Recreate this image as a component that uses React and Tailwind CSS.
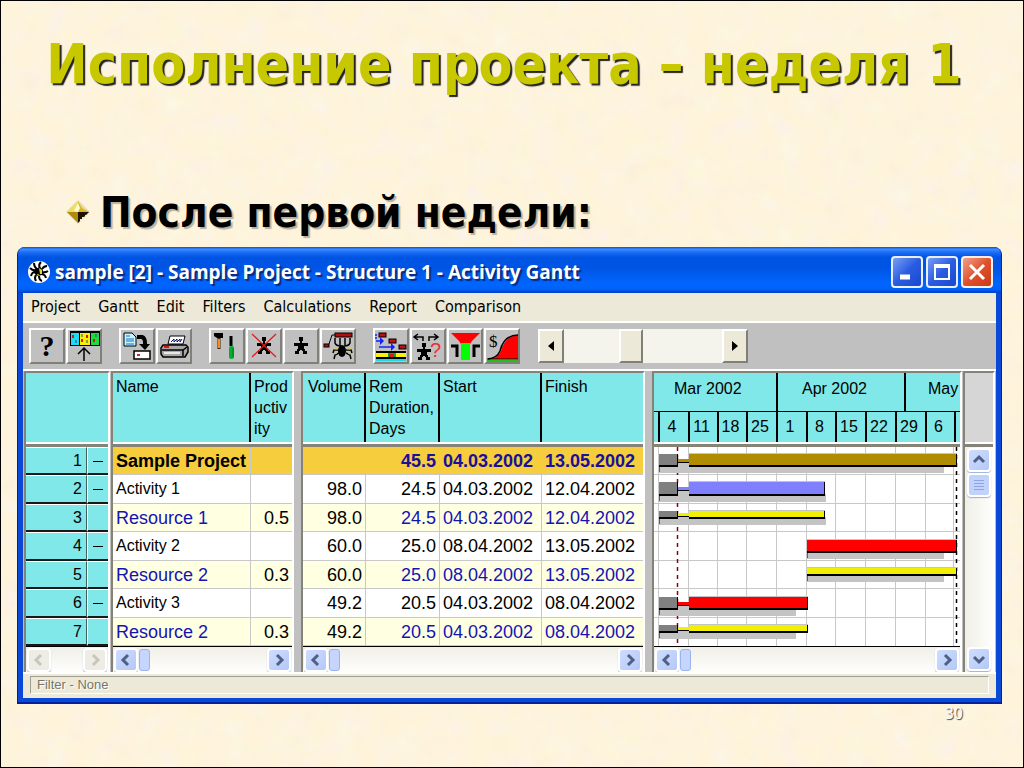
import React from 'react';
import clsx from 'clsx';

const menuItems = ['Project', 'Gantt', 'Edit', 'Filters', 'Calculations', 'Report', 'Comparison'];

const rows = [
  { id: 1, kind: 'project', name: 'Sample Project', prod: '', volume: '', rem: '45.5', start: '04.03.2002', finish: '13.05.2002' },
  { id: 2, kind: 'activity', name: 'Activity 1', prod: '', volume: '98.0', rem: '24.5', start: '04.03.2002', finish: '12.04.2002' },
  { id: 3, kind: 'resource', name: 'Resource 1', prod: '0.5', volume: '98.0', rem: '24.5', start: '04.03.2002', finish: '12.04.2002' },
  { id: 4, kind: 'activity', name: 'Activity 2', prod: '', volume: '60.0', rem: '25.0', start: '08.04.2002', finish: '13.05.2002' },
  { id: 5, kind: 'resource', name: 'Resource 2', prod: '0.3', volume: '60.0', rem: '25.0', start: '08.04.2002', finish: '13.05.2002' },
  { id: 6, kind: 'activity', name: 'Activity 3', prod: '', volume: '49.2', rem: '20.5', start: '04.03.2002', finish: '08.04.2002' },
  { id: 7, kind: 'resource', name: 'Resource 2', prod: '0.3', volume: '49.2', rem: '20.5', start: '04.03.2002', finish: '08.04.2002' },
];

const rowBg = { project: 'bg-[#f5cd3d]', activity: 'bg-white', resource: 'bg-[#ffffe1]' };
const rowText = {
  project: 'text-[#1a0f9c] font-bold',
  activity: 'text-black',
  resource: 'text-[#1414b4]',
};
const nameText = {
  project: 'text-lg/5 font-bold text-black',
  activity: 'text-base/5 text-black',
  resource: 'text-lg/5 text-[#1414b4]',
};

const weeks = ['4', '11', '18', '25', '1', '8', '15', '22', '29', '6'];
const weekLines = [4, 34, 63, 92, 122, 152, 181, 211, 241, 271, 299];
const rowLines = [27, 56, 84, 113, 141, 170];

// y / height of each bar, its colour, and where it runs
const bars = [
  { y: 7, h: 11, color: '#b08c00', done: true, from: 35, to: 303, shadow: 290 },
  { y: 35, h: 12, color: '#8080ff', done: true, from: 35, to: 171, shadow: 172 },
  { y: 64, h: 6, color: '#f0f000', done: true, from: 35, to: 171, shadow: 172 },
  { y: 93, h: 11, color: '#ff0000', done: false, from: 153, to: 303, shadow: 290 },
  { y: 121, h: 6, color: '#f0f000', done: false, from: 153, to: 303, shadow: 290 },
  { y: 150, h: 11, color: '#ff0000', done: true, from: 35, to: 154, shadow: 142 },
  { y: 178, h: 6, color: '#f0f000', done: true, from: 35, to: 154, shadow: 142 },
];

/* ---------- backdrop and small drawings ---------- */

const Parchment = () => (
  <svg className="absolute inset-0 -z-10 h-full w-full" aria-hidden="true">
    <filter id="paper" x="0" y="0" width="100%" height="100%">
      <feTurbulence type="fractalNoise" baseFrequency="0.045" numOctaves="4" seed="8" />
      <feColorMatrix values="0 0 0 0 0.94  0.2 0 0 0 0.79  0 0.5 0 0 0.54  0 0 1.6 0 -0.35" />
    </filter>
    <rect width="100%" height="100%" fill="#fff4da" />
    <rect width="100%" height="100%" filter="url(#paper)" opacity="0.55" />
  </svg>
);

const Bullet = () => (
  <svg width="24" height="24" viewBox="0 0 24 24" aria-hidden="true">
    <path d="M12 0 L24 12 L12 24 L0 12 Z" fill="#e4dab8" />
    <path d="M12 1 L12 12 L1 12 Z" fill="#f0dc60" />
    <path d="M12 1 L16 8 L23 12 L12 12 Z" fill="#dcb820" />
    <path d="M12 3 L14 8 L12 12 L8 11 Z" fill="#fffbd0" />
    <path d="M1 12 L12 12 L12 23 Z" fill="#b08a10" />
    <path d="M12 12 L23 12 L12 23 Z" fill="#1c1400" />
    <path d="M16 17 h3 v-2 h2 L14 22 v-3 h2 Z" fill="#f4ead0" />
  </svg>
);

const AppIcon = () => (
  <svg width="22" height="24" viewBox="0 0 22 24" aria-hidden="true">
    <circle cx="11" cy="12" r="11" fill="#fff" />
    <path
      d="M6 3 Q6 7 9 9 M13 2 Q10 5 12 8 M19 6 Q16 6 14 9 M2 8 Q5 11 8 10 M3 16 Q4 12 7 12 M8 21 Q6 18 8 15 M14 21 Q11 20 11 16 M18 18 Q17 14 13 14 M20 11 Q17 13 14 12"
      stroke="#000"
      strokeWidth="2"
      fill="none"
    />
    <path d="M7 9 L12 7 L15 10 L14 15 L9 16 L6 13 Z" fill="#000" />
    <path d="M11 8 l3 2 l0 4 l-2 0 Z" fill="#e8d820" />
    <path d="M9 14 l2 0 l-1 2 Z" fill="#e8d820" />
  </svg>
);

const Icon = ({ children }) => (
  <svg width="36" height="36" viewBox="0 0 36 36" aria-hidden="true">
    {children}
  </svg>
);

const Figure = ({ x = 18, y = 9 }) => (
  <g transform={`translate(${x} ${y})`}>
    <path d="M-2 0 h4 v4 h-1 v2 h-2 v-2 h-1 Z" />
    <path d="M-7 6 h14 v3 h-4 v3 h1 v2 h2 v3 h-4 v-3 h-1 v-1 h-2 v1 h-1 v3 h-4 v-3 h2 v-2 h1 v-3 h-4 Z" />
  </g>
);

const GanttUp = () => (
  <Icon>
    <rect x="4" y="3" width="30" height="15" />
    <rect x="5" y="5" width="8" height="12" fill="#20d8f8" />
    <rect x="14" y="5" width="10" height="12" fill="#ffee00" />
    <rect x="25" y="5" width="8" height="12" fill="#20d840" />
    <path d="M7 7 v3 M16 11 v3 M21 7 v3 M28 11 v3" stroke="#d02000" strokeWidth="2" />
    <path d="M10 12 v3 M16 6 v3 M21 12 v3 M30 6 v3" stroke="#205080" strokeWidth="1" />
    <path d="M18 33 V20 M12 26 L18 20 L24 26" stroke="#000" strokeWidth="1.5" fill="none" />
  </Icon>
);

const CopyTo = () => (
  <Icon>
    <path d="M5 5 h8 l4 4 v9 h-12 Z" fill="#c8f4ff" stroke="#000" />
    <path d="M7 8 h4 M7 11 h8 M7 13 h8 M7 16 h8" stroke="#1070c0" />
    <path d="M18 9 h5 q3 1 3 6 v2" stroke="#000" strokeWidth="4" fill="none" />
    <path d="M20 16 h11 l-5 6 Z" />
    <rect x="15" y="23" width="16" height="8" fill="#fff" stroke="#000" strokeWidth="1.5" />
    <rect x="18" y="26" width="3" height="2" fill="#e02020" />
  </Icon>
);

const Printer = () => (
  <Icon>
    <path d="M12 16 L14 8 H29 L27 16 Z" fill="#fff" stroke="#000" />
    <path d="M15 14 l3 -3 v3 l3 -3 v3 l3 -3 v3 l2 -3" stroke="#101070" fill="none" />
    <path d="M7 17 h23 l2 2 v5 l-3 5 H7 l-2 -3 v-6 Z" fill="#a8a8a8" stroke="#000" strokeWidth="1.5" />
    <path d="M6 22 h21 l4 -3 M27 22 v6" stroke="#000" strokeWidth="1.5" fill="none" />
    <rect x="8" y="18" width="5" height="2" fill="#e01010" />
    <path d="M8 25 h16" stroke="#e8e8e8" strokeWidth="2" />
  </Icon>
);

const Tools = () => (
  <Icon>
    <path d="M5 5 h9 v5 h-6 l-3 -2 Z" />
    <path d="M10 10 v11" stroke="#402000" strokeWidth="3" />
    <path d="M10 11 v9" stroke="#f09020" strokeWidth="2" />
    <path d="M22 8 v10" stroke="#000" strokeWidth="3" />
    <rect x="20" y="18" width="5" height="13" rx="2" fill="#00b030" />
    <path d="M24 20 v9" stroke="#007020" />
  </Icon>
);

const NoPerson = () => (
  <Icon>
    <Figure />
    <path d="M6 6 L30 29 M30 6 L6 29" stroke="#e01818" strokeWidth="1.2" />
  </Icon>
);

const Person = () => (
  <Icon>
    <Figure />
  </Icon>
);

const Spider = () => (
  <Icon>
    <rect x="15" y="5" width="17" height="4" fill="#b01010" stroke="#000" />
    <rect x="4" y="16" width="5" height="3" fill="#b01010" stroke="#000" />
    <path d="M9 16 L12 7 H15" stroke="#000" fill="none" />
    <path d="M15 10 v5 q1 3 6 3 M20 10 v7 M25 10 v7 M30 10 v5 q-1 3 -6 3" stroke="#000" strokeWidth="1.5" fill="none" />
    <ellipse cx="22" cy="23" rx="4" ry="6" />
    <path d="M19 22 l-5 0 l-1 3 M19 25 l-4 2 l-1 4 M26 22 l5 0 l1 3 M26 25 l4 2 l1 4" stroke="#000" strokeWidth="1.5" fill="none" />
    <path d="M14 21 l4 0 M27 21 l4 0 M15 26 l2 -1 M28 25 l2 1" stroke="#e0d010" />
  </Icon>
);

const Levels = () => (
  <Icon>
    <g fill="#c01010" stroke="#000">
      <rect x="6" y="5" width="7" height="4" />
      <rect x="16" y="11" width="7" height="4" />
      <rect x="26" y="17" width="7" height="4" />
    </g>
    <path d="M3 13 h6 M6 19 h13" stroke="#1020ff" strokeWidth="1.5" />
    <path d="M3 6 v5" stroke="#1020ff" strokeWidth="1.5" strokeDasharray="2 1" />
    <path d="M7 9 l4 4 l-4 4 Z M18 15 l4 4 l-4 4 Z" fill="#1020ff" />
    <rect x="3" y="23" width="30" height="10" />
    <rect x="3" y="25" width="30" height="4" fill="#f8f010" />
    <rect x="3" y="31" width="30" height="2" fill="#20d8e8" />
    <rect x="15" y="25" width="8" height="4" fill="#20a030" />
    <rect x="16" y="26" width="5" height="3" fill="#d02010" />
  </Icon>
);

const PersonQuestion = () => (
  <Icon>
    <path d="M13 13 V9 H4 M8 6 L4 9 L8 12 M19 13 V9 H27 M24 6 L28 9 L24 12" stroke="#000" strokeWidth="1.5" fill="none" />
    <Figure x={14} y={15} />
    <text x="20" y="29" fontSize="20" fill="#e83030" fontFamily="Liberation Sans, sans-serif">?</text>
  </Icon>
);

const Funnel = () => (
  <Icon>
    <path d="M4 5 h29 l-8 8 l-2 3 h-9 l-2 -3 Z" fill="#ff0000" />
    <rect x="14" y="15" width="9" height="17" fill="#00ff00" />
    <path d="M4 18 h6 v11 M33 18 h-6 v11" stroke="#000" strokeWidth="3" fill="none" />
  </Icon>
);

const CostCurve = () => (
  <Icon>
    <path d="M5 31 Q14 30 17 23 Q21 8 34 7 V31 Z" fill="#ff0000" />
    <path d="M4 31 Q13 30 16 23 Q20 7 34 7" stroke="#000" strokeWidth="1.5" fill="none" />
    <path d="M3 31 H34" stroke="#000" strokeWidth="1" />
    <path d="M3 33 H34" stroke="#20c020" strokeWidth="2" />
    <text x="5" y="19" fontSize="17" fontFamily="Liberation Serif, serif">$</text>
  </Icon>
);

const HelpMark = () => (
  <span className="font-['Liberation_Serif',serif] text-3xl font-bold">?</span>
);

const toolGroups = [
  [['Help', HelpMark], ['Open Gantt', GanttUp]],
  [['Save', CopyTo], ['Print', Printer]],
  [['Tools', Tools], ['Remove resource', NoPerson], ['Resource', Person], ['Relations', Spider]],
  [['Levelling', Levels], ['Assign', PersonQuestion], ['Critical', Funnel], ['Cost curve', CostCurve]],
];

/* ---------- controls ---------- */

const arrows = {
  left: 'M12 5 L7 10 L12 15',
  right: 'M8 5 L13 10 L8 15',
  up: 'M5 12 L10 7 L15 12',
  down: 'M5 8 L10 13 L15 8',
};

const ScrollButton = ({ dir, disabled }) => (
  <button
    aria-label={`Scroll ${dir}`}
    disabled={disabled}
    className={clsx(
      'flex size-6 shrink-0 items-center justify-center rounded-[4px] border-2 border-white shadow-[0_1px_1px_#9ab0e0]',
      disabled ? 'bg-[#eeede5] text-[#c9c7ba]' : 'bg-linear-to-br from-[#cfdcff] to-[#b4c8f6] text-[#4d6185]'
    )}
  >
    <svg width="20" height="20" viewBox="0 0 20 20" className="shrink-0">
      <path d={arrows[dir]} fill="none" stroke="currentColor" strokeWidth="3" />
    </svg>
  </button>
);

const HScroll = ({ disabled }) => (
  <div className="flex h-[25px] items-center justify-between bg-linear-to-b from-[#f0efe8] to-[#fefefc] px-px">
    <div className="flex gap-px">
      <ScrollButton dir="left" disabled={disabled} />
      {!disabled && <div className="my-px w-[11px] rounded-[3px] border border-[#9ab4ee] bg-[#c6d5fd]" />}
    </div>
    <ScrollButton dir="right" disabled={disabled} />
  </div>
);

// light / dark groove between a pane's header and its rows
const Groove = () => <div className="h-[5px] border-t-2 border-b-[3px] border-t-white border-b-[#858378]" />;

const GrooveRow = ({ span }) => (
  <tr>
    <td colSpan={span} className="p-0">
      <Groove />
    </td>
  </tr>
);

const Pane = ({ className, children }) => (
  <div className={clsx('overflow-hidden border-x-2 border-t-2 border-t-[#858378] border-r-white border-l-[#858378]', className)}>
    {children}
  </div>
);

const Th = ({ className, children }) => (
  <th className={clsx('border-black bg-[#80e8e8] px-[3px] pt-[3px] text-left align-top text-base/[21px] font-normal', className)}>
    {children}
  </th>
);

const Td = ({ className, children }) => (
  <td className={clsx('border-b border-[#c8c8c8] px-[3px] py-0 whitespace-nowrap', className)}>{children}</td>
);

const rowClass = 'h-7 even:h-[29px]';
const tableClass = 'w-full table-fixed border-separate border-spacing-0 border-b border-black';

/* ---------- panes ---------- */

const NumberPane = () => (
  <Pane className="w-[86px] shrink-0">
    <table className={tableClass}>
      <colgroup>
        <col className="w-[61px]" />
        <col />
      </colgroup>
      <thead>
        <tr className="h-[69px]">
          <td colSpan={2} className="bg-[#80e8e8]" />
        </tr>
        <GrooveRow span={2} />
      </thead>
      <tbody>
        {rows.map((row) => (
          <tr key={row.id} className={rowClass}>
            <td className="border-t border-r border-b-2 border-t-white border-r-[#40605e] border-b-[#181818] bg-[#80e8e8] py-0 pr-1 text-right text-base/5">
              {row.id}
            </td>
            <td className="border-t border-b-2 border-l border-t-white border-b-[#181818] border-l-white bg-[#80e8e8] p-0 text-center text-base/5">
              {row.kind !== 'resource' && (
                <button aria-label={`Collapse ${row.name}`} className="h-px w-[10px] bg-black align-middle" />
              )}
            </td>
          </tr>
        ))}
      </tbody>
    </table>
    <HScroll disabled />
  </Pane>
);

const NamePane = () => (
  <Pane className="ml-px w-[183px] shrink-0">
    <table className={tableClass}>
      <colgroup>
        <col className="w-[138px]" />
        <col />
      </colgroup>
      <thead>
        <tr className="h-[69px]">
          <Th className="border-r-2">Name</Th>
          <Th className="break-all">Productivity</Th>
        </tr>
        <GrooveRow span={2} />
      </thead>
      <tbody>
        {rows.map((row) => (
          <tr key={row.id} className={clsx(rowClass, rowBg[row.kind])}>
            <Td className={clsx('border-r', nameText[row.kind])}>{row.name}</Td>
            <Td className="text-right text-lg/5">{row.prod}</Td>
          </tr>
        ))}
      </tbody>
    </table>
    <HScroll />
  </Pane>
);

const DataPane = () => (
  <Pane className="ml-[7px] w-[344px] shrink-0">
    <table className={tableClass}>
      <colgroup>
        <col className="w-[63px]" />
        <col className="w-[74px]" />
        <col className="w-[102px]" />
        <col />
      </colgroup>
      <thead>
        <tr className="h-[69px]">
          <Th className="border-r-2 pl-[5px]">Volume</Th>
          <Th className="border-r-2">Rem Duration, Days</Th>
          <Th className="border-r-2">Start</Th>
          <Th>Finish</Th>
        </tr>
        <GrooveRow span={4} />
      </thead>
      <tbody className="text-lg/5">
        {rows.map((row) => (
          <tr key={row.id} className={clsx(rowClass, rowBg[row.kind], rowText[row.kind])}>
            <Td className="border-r text-right text-black">{row.volume}</Td>
            <Td className="border-r text-right">{row.rem}</Td>
            <Td className="border-r">{row.start}</Td>
            <Td>{row.finish}</Td>
          </tr>
        ))}
      </tbody>
    </table>
    <HScroll />
  </Pane>
);

const Chart = () => (
  <svg className="block h-[199px] w-full bg-white" role="img" aria-label="Gantt bars">
    <g stroke="#c8c8c8" strokeWidth="1" shapeRendering="crispEdges">
      {weekLines.map((x) => (
        <line key={x} x1={x} x2={x} y1="0" y2="199" />
      ))}
      {rowLines.map((y) => (
        <line key={y} x1="0" x2="100%" y1={y} y2={y} />
      ))}
    </g>
    <path d="M23.5 0 V199" stroke="#900010" strokeWidth="1.5" strokeDasharray="4 4" />
    <path d="M302.5 0 V199" stroke="#000" strokeWidth="1.5" strokeDasharray="4 4" />
    <g shapeRendering="crispEdges">
      {bars.map(({ y, h, color, done, from, to, shadow }) => {
        const left = done ? 5 : from;
        return (
          <g key={y}>
            <rect x={left} y={y + h} width={shadow - left} height="8" fill="#c4c4c4" />
            <rect x={left} y={y + h} width="1" height="7" fill="#606060" />
            {done && (
              <>
                <rect x="5" y={y} width="19" height={h + 2} />
                <rect x="5" y={y} width="18" height={h} fill="#808080" />
                <rect x="24" y={y + h / 2 - 1} width="11" height="3" fill={color} />
                <rect x="24" y={y + h / 2 + 2} width="11" height="1" />
                <rect x="24" y={y + h / 2 + 3} width="11" height={h / 2} fill="#c4c4c4" />
              </>
            )}
            <rect x={from} y={y - 1} width={to - from} height="1" fill="#c4c4c4" />
            <rect x={from} y={y} width={to - from} height={h + 2} />
            <rect x={from} y={y} width={to - from - 1} height={h} fill={color} />
          </g>
        );
      })}
    </g>
  </svg>
);

const ChartPane = () => (
  <Pane className="ml-[7px] min-w-0 flex-1">
    <div className="h-[69px] overflow-hidden bg-[#80e8e8] text-base/5">
      <div className="flex h-[39px] border-b border-black">
        <div className="w-[122px] shrink-0 pt-[6px] pl-5">Mar 2002</div>
        <div className="w-32 shrink-0 border-l-2 border-black pt-[6px] pl-6">Apr 2002</div>
        <div className="flex-1 border-l-2 border-black pt-[6px] pl-[22px]">May</div>
      </div>
      <div className="flex h-[30px] pl-1">
        {weeks.map((week) => (
          <div
            key={week}
            className={clsx(
              'flex shrink-0 items-center justify-center border-l-2 border-black pr-1',
              ['11', '18', '8', '6'].includes(week) ? 'w-[29px]' : 'w-[30px]'
            )}
          >
            {week}
          </div>
        ))}
        <div className="flex-1 border-l-2 border-black" />
      </div>
    </div>
    <Groove />
    <Chart />
    <div className="h-px bg-black" />
    <HScroll />
  </Pane>
);

const ScrollPane = () => (
  <Pane className="ml-px flex w-8 shrink-0 flex-col">
    <div className="h-[69px] shrink-0 bg-[#d6d6d6]" />
    <Groove />
    <div className="flex flex-1 flex-col items-center justify-between bg-linear-to-r from-[#f0efe8] to-[#fefefc] py-px">
      <div className="flex flex-col gap-px">
        <ScrollButton dir="up" />
        <div className="flex size-6 flex-col items-center justify-center gap-[2px] rounded-[4px] border-2 border-white bg-[#c2d2fb] shadow-[0_1px_1px_#9ab0e0]">
          <span className="h-px w-[10px] bg-[#8ba6e6]" />
          <span className="h-px w-[10px] bg-[#8ba6e6]" />
          <span className="h-px w-[10px] bg-[#8ba6e6]" />
          <span className="h-px w-[10px] bg-[#8ba6e6]" />
        </div>
      </div>
      <ScrollButton dir="down" />
    </div>
  </Pane>
);

/* ---------- window parts ---------- */

const captionButton = 'flex size-8 items-center justify-center rounded-[4px] border-2 border-white/90';

const TitleBar = () => (
  <div className="flex h-[46px] items-center bg-[linear-gradient(to_bottom,#0a50d0_0%,#3c8cff_5%,#1a6cf4_12%,#0054e3_22%,#0054e3_45%,#0066ff_80%,#0060f8_92%,#0040c8_100%)] pt-1 pr-2 pl-[10px] text-white">
    <AppIcon />
    <span className="ml-[5px] font-['Open_Sans','Noto_Sans',sans-serif] text-[19px]/6 font-bold whitespace-nowrap [text-shadow:2px_2px_1px_#0a2a80]">
      sample [2] - Sample Project - Structure 1 - Activity Gantt
    </span>
    <div className="ml-auto flex gap-[3px]">
      <button aria-label="Minimize" className={clsx(captionButton, 'bg-linear-to-br from-[#7a9cf4] via-[#2a5ce0] to-[#1a48d0]')}>
        <svg width="20" height="20" viewBox="0 0 20 20">
          <path d="M3 15 H13" stroke="#fff" strokeWidth="5" />
        </svg>
      </button>
      <button aria-label="Maximize" className={clsx(captionButton, 'bg-linear-to-br from-[#7a9cf4] via-[#2a5ce0] to-[#1a48d0]')}>
        <svg width="20" height="20" viewBox="0 0 20 20">
          <path d="M2 4 H18" stroke="#fff" strokeWidth="4" />
          <rect x="3" y="4" width="14" height="13" fill="none" stroke="#fff" strokeWidth="2" />
        </svg>
      </button>
      <button aria-label="Close" className={clsx(captionButton, 'bg-linear-to-br from-[#f0a088] via-[#e0502c] to-[#c83c14]')}>
        <svg width="20" height="20" viewBox="0 0 20 20">
          <path d="M3 3 L17 17 M17 3 L3 17" stroke="#fff" strokeWidth="3" />
        </svg>
      </button>
    </div>
  </div>
);

const raised = 'border-2 border-t-white border-l-white border-r-[#808078] border-b-[#808078]';

const Toolbar = () => (
  <div className="flex h-12 items-center border-b-2 border-white bg-[#c0c0c0] pl-[6px]">
    <div className="flex gap-[17px]">
      {toolGroups.map((group, i) => (
        <div key={i} className="flex gap-px">
          {group.map(([label, Drawing]) => (
            <button
              key={label}
              aria-label={label}
              className={clsx('flex size-9 items-center justify-center bg-[#c0c0c0] *:shrink-0', raised)}
            >
              <Drawing />
            </button>
          ))}
        </div>
      ))}
    </div>
    <div className="ml-[18px] flex h-[34px]">
      <button aria-label="Scale down" className={clsx('flex w-[26px] items-center justify-center bg-[#ece9d8]', raised)}>
        <svg width="6" height="10" viewBox="0 0 6 10">
          <path d="M6 0 V10 L0 5 Z" />
        </svg>
      </button>
      <input
        type="range"
        aria-label="Time scale"
        min="0"
        max="100"
        defaultValue="41"
        className="h-full w-[158px] appearance-none bg-[#f5f4ec] [&::-webkit-slider-thumb]:h-[34px] [&::-webkit-slider-thumb]:w-6 [&::-webkit-slider-thumb]:appearance-none [&::-webkit-slider-thumb]:border-2 [&::-webkit-slider-thumb]:border-t-white [&::-webkit-slider-thumb]:border-r-[#808078] [&::-webkit-slider-thumb]:border-b-[#808078] [&::-webkit-slider-thumb]:border-l-white [&::-webkit-slider-thumb]:bg-[#ece9d8]"
      />
      <button aria-label="Scale up" className={clsx('flex w-[26px] items-center justify-center bg-[#ece9d8]', raised)}>
        <svg width="6" height="10" viewBox="0 0 6 10">
          <path d="M0 0 V10 L6 5 Z" />
        </svg>
      </button>
    </div>
  </div>
);

const GanttWindow = () => (
  <section className="mr-[21px] ml-4 overflow-hidden rounded-t-lg border-x border-b-2 border-[#0020a0] bg-[#0a48d8]">
    <TitleBar />
    <div className="mx-[5px] mb-1 bg-[#ece9d8]">
      <nav className="flex h-[30px] items-center gap-[18px] border-b-2 border-white px-2 font-['DejaVu_Sans_Condensed','DejaVu_Sans',sans-serif] text-base/5">
        {menuItems.map((item) => (
          <button key={item}>{item}</button>
        ))}
      </nav>
      <Toolbar />
      <div className="flex bg-[#c0c0c0] px-px">
        <NumberPane />
        <NamePane />
        <DataPane />
        <ChartPane />
        <ScrollPane />
      </div>
      <div className="border-t-2 border-white px-[7px] pt-[2px] pb-1">
        <div className="h-[18px] border border-t-[#a09e90] border-r-white border-b-white border-l-[#a09e90] pl-[6px] text-[13px]/[15px] text-[#77756a] [text-shadow:1px_1px_0_#fff]">
          Filter - None
        </div>
      </div>
    </div>
  </section>
);

const App = () => (
  <div className="relative isolate flex min-h-screen flex-col overflow-hidden border border-black font-['Liberation_Sans',Arial,sans-serif] text-black">
    <Parchment />

    <h1 className="flex h-[126px] items-center justify-center pr-4 font-['Comic_Sans_MS','DejaVu_Sans_Condensed','DejaVu_Sans',sans-serif] text-[55px] font-bold whitespace-nowrap text-[#c8c800] [text-shadow:2px_2px_1px_#222]">
      Исполнение проекта – неделя 1
    </h1>

    <div className="mt-[50px] flex h-[70px] items-center gap-[10px] pl-[65px]">
      <Bullet />
      <h2 className="font-['DejaVu_Sans_Condensed','DejaVu_Sans',sans-serif] text-[42px] font-bold [text-shadow:2px_2px_1px_#b8b0a0]">
        После первой недели:
      </h2>
    </div>

    <GanttWindow />

    <footer className="pr-[60px] text-right font-['DejaVu_Sans_Condensed','DejaVu_Sans',sans-serif] text-base/5 text-white [text-shadow:1px_1px_1px_#444]">
      30
    </footer>
  </div>
);

export default App;
